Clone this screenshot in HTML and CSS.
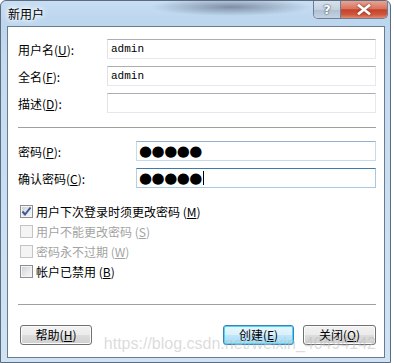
FILE: index.html
```html
<!DOCTYPE html>
<html lang="zh-CN">

<head>
    <meta charset="UTF-8">
    <title>新用户</title>
    <link rel="stylesheet" href="styles.css">
</head>

<body>

    <div class="window">
        <div class="titlebar">
            <span class="title">新用户</span>
            <div class="caption-btns">
                <span class="cap-help">?</span>
                <span class="cap-close">
                    <svg width="14" height="11" viewBox="0 0 14 11">
                        <path d="M2 1.5 L12 9.5 M12 1.5 L2 9.5" stroke="#ffffff" stroke-width="2.6" stroke-linecap="square" fill="none"/>
                    </svg>
                </span>
            </div>
        </div>

        <div class="client">
            <div class="fields">
                <div class="row">
                    <label class="lbl">用户名(<u>U</u>):</label>
                    <div class="edit">admin</div>
                </div>
                <div class="row">
                    <label class="lbl">全名(<u>F</u>):</label>
                    <div class="edit">admin</div>
                </div>
                <div class="row">
                    <label class="lbl">描述(<u>D</u>):</label>
                    <div class="edit"></div>
                </div>
            </div>

            <div class="sep sep-top"></div>

            <div class="fields">
                <div class="row">
                    <label class="lbl lbl-wide">密码(<u>P</u>):</label>
                    <div class="edit edit-hover dots">●●●●●</div>
                </div>
                <div class="row">
                    <label class="lbl lbl-wide">确认密码(<u>C</u>):</label>
                    <div class="edit edit-focus dots">●●●●●<span class="caret"></span></div>
                </div>
            </div>

            <div class="checks">
                <div class="check">
                    <span class="box">
                        <svg width="11" height="11" viewBox="0 0 11 11">
                            <path d="M1.5 5.5 L4 8.5 L9.5 1.5" stroke="#3c5894" stroke-width="2" fill="none"/>
                        </svg>
                    </span>
                    <span>用户下次登录时须更改密码 (<u>M</u>)</span>
                </div>
                <div class="check disabled">
                    <span class="box"></span>
                    <span>用户不能更改密码 (<u>S</u>)</span>
                </div>
                <div class="check disabled">
                    <span class="box"></span>
                    <span>密码永不过期 (<u>W</u>)</span>
                </div>
                <div class="check">
                    <span class="box"></span>
                    <span>帐户已禁用 (<u>B</u>)</span>
                </div>
            </div>

            <div class="sep sep-bottom"></div>

            <div class="buttons">
                <button class="btn btn-help">帮助(<u>H</u>)</button>
                <div class="btn-right">
                    <button class="btn btn-default">创建(<u>E</u>)</button>
                    <button class="btn">关闭(<u>O</u>)</button>
                </div>
            </div>

            <div class="watermark">https://blog.csdn.net/weixin_40494142</div>
        </div>
    </div>

</body>

</html>
```

FILE: styles.css
```css
* {
    box-sizing: border-box;
    margin: 0;
    padding: 0;
}

body {
    width: 394px;
    height: 363px;
    background-color: #ffffff;
    font-family: "Noto Sans CJK SC", "DejaVu Sans", sans-serif;
    font-size: 12px;
    color: #000000;
    overflow: hidden;
}

u {
    text-decoration: underline;
}

.window {
    width: 391px;
    height: 363px;
    display: flex;
    flex-direction: column;
    padding: 0 5px 4px 6px;
    border: 1px solid #5d6b7c;
    border-radius: 6px 6px 0 0;
    background:
        radial-gradient(ellipse 80px 9px at 230px 6px, rgba(70, 80, 100, 0.55), rgba(70, 80, 100, 0) 100%),
        linear-gradient(to bottom, #c7def3 0%, #bcd6ee 20px, #c3dbf1 60px, #cfe3f5 100%);
}

/* Title bar */
.titlebar {
    height: 25px;
    display: flex;
    align-items: flex-start;
    flex-shrink: 0;
}

.title {
    margin-top: 5px;
    padding-left: 1px;
    line-height: 16px;
    text-shadow: 0 0 4px #ffffff, 0 0 6px #ffffff, 0 0 8px #ffffff;
}

.caption-btns {
    margin-left: auto;
    margin-right: -3px;
    display: flex;
    border: 1px solid #6f7f93;
    border-top: none;
    border-radius: 0 0 5px 5px;
    overflow: hidden;
}

.cap-help {
    width: 27px;
    height: 17px;
    display: flex;
    justify-content: center;
    align-items: center;
    border-right: 1px solid #6f7f93;
    background: linear-gradient(to bottom, #d6e2ee 0%, #c3d1df 50%, #aebfd2 51%, #c3d3e3 100%);
    color: #ffffff;
    font-family: "DejaVu Sans", sans-serif;
    font-weight: bold;
    font-size: 13px;
    text-shadow: 0 0 1px #3d4a5b, 0 0 2px #3d4a5b;
}

.cap-close {
    width: 46px;
    height: 17px;
    display: flex;
    justify-content: center;
    align-items: center;
    background: linear-gradient(to bottom, #e8a493 0%, #d9745f 45%, #c6412a 52%, #d0573f 80%, #e28a6c 100%);
}

.cap-close svg {
    filter: drop-shadow(0 0 1px #7a2a1b);
}

/* Client area */
.client {
    position: relative;
    flex: 1;
    display: flex;
    flex-direction: column;
    padding: 12px 8px 0 10px;
    background-color: #ffffff;
    border: 1px solid #6b7a8c;
}

.fields {
    display: flex;
    flex-direction: column;
    gap: 7px;
}

.row {
    display: flex;
    align-items: center;
    height: 20px;
}

.lbl {
    width: 89px;
    flex-shrink: 0;
}

.lbl-wide {
    width: 118px;
}

.edit {
    flex: 1;
    height: 20px;
    padding-left: 3px;
    display: flex;
    align-items: center;
    border: 1px solid;
    border-color: #abadb3 #e3e9ef #e3e9ef #e2e3ea;
    font-family: "Liberation Mono", monospace;
    font-size: 11px;
}

.edit-hover {
    border-color: #8fb3d1 #c5dcee #c5dcee #c5dcee;
}

.edit-focus {
    border-color: #3d7bad #a4c9e3 #a4c9e3 #b5cfe7;
}

.dots {
    padding-left: 2px;
    font-family: "DejaVu Sans", sans-serif;
    font-size: 15px;
    letter-spacing: -0.5px;
}

.caret {
    width: 1px;
    height: 14px;
    margin-left: 1px;
    background-color: #000000;
}

.sep {
    height: 1px;
    background-color: #a0a0a0;
}

.sep-top {
    margin: 14px 0 13px;
}

.checks {
    margin-top: 13px;
    display: flex;
    flex-direction: column;
}

.check {
    height: 20px;
    display: flex;
    align-items: center;
    gap: 3px;
    padding-left: 2px;
}

.box {
    width: 13px;
    height: 13px;
    display: flex;
    justify-content: center;
    align-items: center;
    border: 1px solid #8e8f8f;
    box-shadow: inset 0 0 0 1px #f4f4f4;
    background: linear-gradient(135deg, #cbcfd5 0%, #e4e6ea 50%, #f7f7f7 100%);
}

.disabled {
    color: #a3a3a3;
}

.disabled .box {
    border-color: #c4c4c4;
    box-shadow: none;
    background: #f4f4f4;
}

.sep-bottom {
    margin-top: 23px;
}

.buttons {
    margin-top: 20px;
    display: flex;
    justify-content: space-between;
    padding-left: 2px;
}

.btn-right {
    display: flex;
    gap: 9px;
}

.btn {
    width: 73px;
    height: 20px;
    border: 1px solid #707070;
    border-radius: 3px;
    background: linear-gradient(to bottom, #f2f2f2 0%, #ebebeb 50%, #dddddd 51%, #cfcfcf 100%);
    box-shadow: inset 0 0 0 1px #fbfbfb;
    font-family: "Noto Sans CJK SC", "DejaVu Sans", sans-serif;
    font-size: 12px;
    line-height: 16px;
    color: #000000;
}

.btn-help {
    width: 72px;
}

.btn-default {
    width: 71px;
    border-color: #3c7fb1;
    box-shadow: inset 0 0 0 1px #48d8f9;
    background: linear-gradient(to bottom, #eaf6fd 0%, #d9f0fc 50%, #bee6fd 51%, #a7d9f5 100%);
}

/* blog watermark over the buttons */
.watermark {
    position: absolute;
    right: 8px;
    bottom: 4px;
    font-family: "Liberation Sans", sans-serif;
    font-size: 16px;
    color: rgba(190, 190, 190, 0.55);
    pointer-events: none;
}
```
